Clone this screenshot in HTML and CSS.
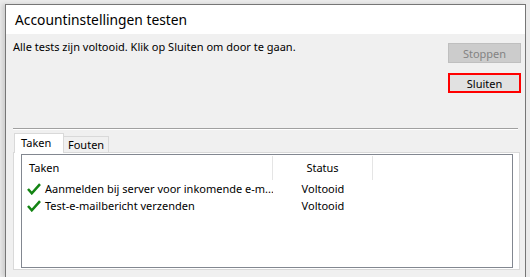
FILE: index.html
```html
<!DOCTYPE html>
<html lang="nl">
<head>
    <meta charset="UTF-8">
    <title>Accountinstellingen testen</title>
    <link rel="stylesheet" href="styles.css">
</head>
<body>
    <div class="window">
        <div class="titlebar">Accountinstellingen testen</div>
        <div class="content">
            <div class="top">
                <p class="message">Alle tests zijn voltooid. Klik op Sluiten om door te gaan.</p>
                <div class="buttons">
                    <button class="btn" disabled>Stoppen</button>
                    <button class="btn btn-focus">Sluiten</button>
                </div>
            </div>
            <div class="separator"></div>
            <div class="tabs">
                <div class="tab active">Taken</div>
                <div class="tab">Fouten</div>
            </div>
            <div class="panel">
                <div class="listview">
                    <div class="lv-header">
                        <div class="col col-task">Taken</div>
                        <div class="col col-status">Status</div>
                    </div>
                    <div class="lv-row">
                        <div class="col col-task">
                            <svg class="check" width="14" height="12" viewBox="0 0 14 12"><path d="M1 6 L4.8 10.3 L13 1.2" fill="none" stroke="#138413" stroke-width="2.5"/></svg>
                            <span>Aanmelden bij server voor inkomende e-m...</span>
                        </div>
                        <div class="col col-status">Voltooid</div>
                    </div>
                    <div class="lv-row">
                        <div class="col col-task">
                            <svg class="check" width="14" height="12" viewBox="0 0 14 12"><path d="M1 6 L4.8 10.3 L13 1.2" fill="none" stroke="#138413" stroke-width="2.5"/></svg>
                            <span>Test-e-mailbericht verzenden</span>
                        </div>
                        <div class="col col-status">Voltooid</div>
                    </div>
                </div>
            </div>
        </div>
    </div>
</body>
</html>
```

FILE: styles.css
```css
body {
    margin: 0;
    padding: 4px 0 0 5px;
    background-color: #ebebeb;
    font-family: 'Segoe UI', 'Noto Sans', sans-serif;
    font-size: 11px;
    color: #000;
    overflow: hidden;
}
.window {
    box-sizing: border-box;
    width: 521px;
    height: 273px;
    border: 1px solid #767676;
    border-bottom: none;
    box-shadow: -3px 0 4px rgba(0, 0, 0, 0.12);
    overflow: hidden;
}
.titlebar {
    height: 29px;
    line-height: 29px;
    padding-left: 9px;
    background-color: #fff;
    font-size: 13.8px;
}
.content {
    background-color: #f0f0f0;
    height: 243px;
}
.top {
    display: flex;
    align-items: flex-start;
    padding: 5px 4px 0 7px;
}
.message {
    flex: 1;
    margin: 0;
    line-height: 16px;
}
.buttons {
    display: flex;
    flex-direction: column;
    gap: 10px;
    margin-top: 4px;
}
.btn {
    box-sizing: border-box;
    width: 73px;
    height: 20px;
    padding: 0;
    font-family: inherit;
    font-size: 11px;
    background-color: #e1e1e1;
    border: 1px solid #adadad;
    color: #000;
}
.btn:disabled {
    background-color: #cccccc;
    border-color: #bfbfbf;
    color: #838383;
}
.btn-focus {
    border: 2px solid #ff0000;
}
.separator {
    margin: 35px 7px 0 7px;
    border-top: 1px solid #a0a0a0;
    border-bottom: 1px solid #fff;
}
.tabs {
    display: flex;
    align-items: flex-end;
    height: 19px;
    margin: 3px 0 0 8px;
}
.tab {
    box-sizing: border-box;
    height: 16px;
    width: 45px;
    padding: 0 0 0 4px;
    line-height: 16px;
    border: 1px solid #d9d9d9;
    border-bottom: none;
    border-left: none;
    background-color: #f0f0f0;
}
.tab.active {
    position: relative;
    z-index: 1;
    width: 50px;
    height: 20px;
    margin-bottom: -1px;
    padding-left: 6px;
    line-height: 17px;
    border-left: 1px solid #d9d9d9;
    background-color: #fff;
}
.panel {
    box-sizing: border-box;
    width: 507px;
    height: 118px;
    margin-left: 7px;
    padding: 1px 6px 1px 7px;
    border: 1px solid #d9d9d9;
    background-color: #fff;
}
.listview {
    box-sizing: border-box;
    height: 114px;
    border: 1px solid #828790;
    background-color: #fff;
}
.lv-header {
    display: flex;
    height: 25px;
    line-height: 25px;
}
.lv-header .col {
    box-sizing: border-box;
    margin-top: 1px;
    height: 24px;
    line-height: 24px;
    border-right: 1px solid #e5e5e5;
}
.lv-row {
    display: flex;
    height: 17px;
    line-height: 17px;
}
.col {
    box-sizing: border-box;
    white-space: nowrap;
    overflow: hidden;
}
.col-task {
    width: 251px;
    padding-left: 7px;
}
.lv-row .col-task {
    display: flex;
    align-items: center;
    gap: 4px;
    padding-left: 5px;
}
.col-status {
    width: 100px;
    text-align: center;
}
.check {
    flex: none;
}
```
